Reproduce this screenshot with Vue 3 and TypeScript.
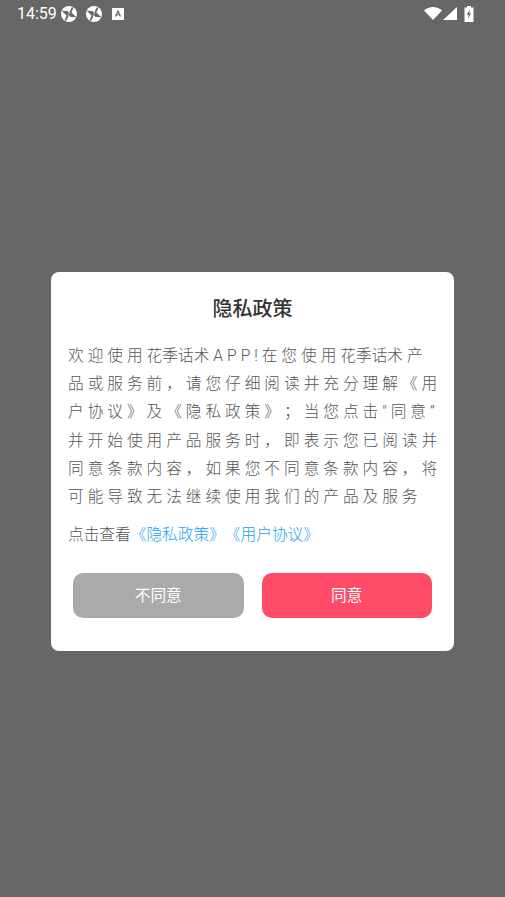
<script setup lang="ts">
const lines: string[] = [
  '品或服务前，请您仔细阅读并充分理解《用',
  '户协议》及《隐私政策》；当您点击"同意”',
  '并开始使用产品服务时，即表示您已阅读并',
  '同意条款内容，如果您不同意条款内容，将',
  '可能导致无法继续使用我们的产品及服务',
]
</script>

<template>
  <div class="screen">
    <header class="status">
      <div class="status-left">
        <span class="time">14:59</span>
        <svg v-for="n in 2" :key="n" class="aperture" viewBox="0 0 16 16">
          <circle cx="8" cy="8" r="8" fill="#fff" />
          <path d="M.6 4.800 L6.400 5 L8.600 7.400 L5.600 9.400 Z M15.400 11.200 L9.600 11 L7.400 8.600 L10.400 6.600 Z" fill="#676767" />
          <path d="M8.200 6.600 L11 1 L12.400 1.900 L9.900 7.600 Z M7.800 9.400 L5 15 L3.600 14.100 L6.100 8.400 Z" fill="#676767" />
        </svg>
        <svg class="note" viewBox="0 0 12 12">
          <path d="M0 0h12v12H0z" fill="#fff" />
          <path d="M2.900 8.600 L5.400 2.500h1.200L9.100 8.600H7.700L7.200 7.300H4.800L4.300 8.600Z M5.200 6.200h1.600L6 4.200Z" fill="#676767" fill-rule="evenodd" />
        </svg>
      </div>
      <div class="status-right">
        <svg class="wifi" viewBox="0 0 18 13"><path d="M0 3.600C2.400 1.400 5.500 0 9 0s6.600 1.400 9 3.600L9 13Z" fill="#fff" /></svg>
        <svg class="signal" viewBox="0 0 14 13"><path d="M14 0V13H0Z" fill="#fff" /></svg>
        <svg class="battery" viewBox="0 0 10 16">
          <path d="M3 0h4v1.500h2.500V16H.5V1.500H3Z" fill="#fff" />
          <path d="M5.600 3.500 2.900 8.700h1.700L4.200 12.500 7.100 7.200H5.300Z" fill="#676767" />
        </svg>
      </div>
    </header>

    <main class="center">
      <section class="card">
        <h1 class="title">隐私政策</h1>
        <div class="body">
          <div class="line">欢迎使用<span class="tight">花季话</span>术APP!在您使用<span class="tight">花季话</span>术产</div>
          <div v-for="line in lines" :key="line" class="line">{{ line }}</div>
        </div>
        <p class="links">点击查看<span class="link">《隐私政策》《用户协议》</span></p>
        <div class="actions">
          <button class="btn decline" type="button">不同意</button>
          <button class="btn agree" type="button">同意</button>
        </div>
      </section>
    </main>
  </div>
</template>

<style scoped>
.screen {
  width: 505px;
  height: 897px;
  background: #676767;
  display: flex;
  flex-direction: column;
  overflow: hidden;
  font-family: "Roboto", "Noto Sans CJK SC", sans-serif;
  text-spacing-trim: space-all;
}
.status {
  height: 27px;
  display: flex;
  justify-content: space-between;
  align-items: center;
  padding: 0 31px 0 17px;
  box-sizing: border-box;
  flex: none;
}
.status-left, .status-right { display: flex; align-items: center; }
.time { color: #fff; font-size: 16px; line-height: 27px; margin-right: 4px; }
.aperture { width: 16px; height: 16px; margin-right: 9px; }
.note { width: 12px; height: 12px; margin-left: 1px; }
.wifi { width: 18px; height: 13px; }
.signal { width: 14px; height: 13px; margin-left: 1px; }
.battery { width: 10px; height: 16px; margin-left: 7px; }
.center {
  flex: 1;
  display: flex;
  justify-content: center;
  align-items: flex-start;
  padding-top: 245px;
}
.card {
  width: 403px;
  height: 379px;
  background: #fff;
  border-radius: 8px;
  box-sizing: border-box;
  padding: 22px 17px 0;
}
.title {
  margin: 0;
  font-size: 20px;
  line-height: 30px;
  font-weight: 500;
  color: #333;
  text-align: center;
}
.body { margin-top: 18px; }
.line {
  font-size: 15.7px;
  line-height: 28.2px;
  height: 28.2px;
  letter-spacing: 3.95px;
  color: #555;
  font-weight: 300;
  white-space: nowrap;
}
.tight { letter-spacing: 0; }
.links {
  margin: 13px 0 0;
  font-size: 15.7px;
  line-height: 22px;
  color: #555;
  font-weight: 300;
}
.link { color: #1c9ff5; }
.actions {
  margin-top: 27px;
  display: flex;
  justify-content: space-between;
  padding: 0 5px;
}
.btn {
  width: 170.5px;
  height: 45px;
  border: 0;
  border-radius: 10px;
  color: #fff;
  font-size: 15.7px;
  font-family: inherit;
  font-weight: 400;
  padding: 0 0 2px;
}
.decline { background: #aaa; }
.agree { background: #ff4a68; }
</style>
